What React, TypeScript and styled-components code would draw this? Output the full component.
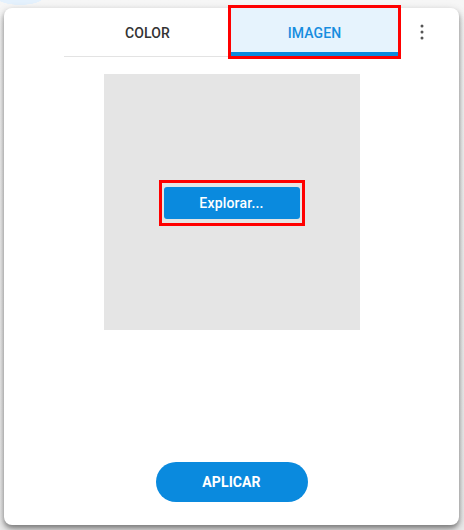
import React from "react";
import styled, { createGlobalStyle } from "styled-components";

const GlobalStyle = createGlobalStyle`
  html, body {
    margin: 0;
    padding: 0;
  }
  body {
    width: 464px;
    height: 530px;
    overflow: hidden;
    font-family: Roboto, "Liberation Sans", Arial, sans-serif;
    background:
      radial-gradient(ellipse 24px 8px at 20px -3px, #e4f1fd 96%, transparent 100%),
      linear-gradient(#f6f6f6, #ececec);
  }
`;

const Page = styled.div`
  padding: 8px 5px 0 4px;
`;

const Dialog = styled.div`
  width: 455px;
  height: 517px;
  background: #ffffff;
  border-radius: 8px;
  box-shadow: 0 3px 4px rgba(0, 0, 0, 0.28), 0 4px 10px rgba(0, 0, 0, 0.3);
  display: flex;
  flex-direction: column;
  align-items: center;
  box-sizing: border-box;
`;

const Header = styled.div`
  width: 100%;
  display: grid;
  grid-template-columns: 60px 1fr 61px;
  align-items: start;
`;

const Tabs = styled.div`
  grid-column: 2;
  display: grid;
  grid-template-columns: 1fr 1fr;
  border-bottom: 1px solid #e3e3e3;
`;

const Tab = styled.button<{ $active?: boolean; $marked?: boolean }>`
  height: 48px;
  border: none;
  margin: 0;
  padding: 2px 0 0;
  font-family: Roboto, "Liberation Sans", Arial, sans-serif;
  font-size: 14px;
  font-weight: 500;
  letter-spacing: 0.1px;
  text-transform: uppercase;
  cursor: pointer;
  color: ${(p) => (p.$active ? "#168ddf" : "#333333")};
  background: ${(p) => (p.$active ? "#e6f3fd" : "transparent")};
  box-shadow: ${(p) => (p.$active ? "inset 0 -4px 0 #0a8ade" : "none")};
  outline: ${(p) => (p.$marked ? "3px solid #ff0000" : "none")};
  position: relative;
  z-index: 1;
`;

const MenuButton = styled.button`
  grid-column: 3;
  justify-self: start;
  margin: 12px 0 0 12px;
  width: 24px;
  height: 24px;
  border: none;
  padding: 0;
  background: transparent;
  color: #555555;
  cursor: pointer;
  display: flex;
  align-items: center;
  justify-content: center;
`;

const Preview = styled.div`
  margin-top: 17px;
  width: 256px;
  height: 256px;
  background: #e5e5e5;
  display: flex;
  align-items: center;
  justify-content: center;
`;

const Marker = styled.span`
  display: inline-flex;
  border: 3px solid #ff0000;
  padding: 4px 2px;
  margin-top: 2px;
`;

const BrowseButton = styled.button`
  width: 136px;
  height: 32px;
  border: none;
  border-radius: 3px;
  background: #0a8ade;
  color: #ffffff;
  font-family: Roboto, "Liberation Sans", Arial, sans-serif;
  font-size: 14px;
  font-weight: 500;
  letter-spacing: 0.2px;
  cursor: pointer;
`;

const Spacer = styled.div`
  flex: 1;
`;

const ApplyButton = styled.button`
  width: 152px;
  height: 40px;
  border: none;
  border-radius: 20px;
  background: #0a8ade;
  color: #ffffff;
  font-family: Roboto, "Liberation Sans", Arial, sans-serif;
  font-size: 14px;
  font-weight: 700;
  letter-spacing: 0.1px;
  cursor: pointer;
  margin-bottom: 23px;
`;

function KebabIcon() {
  return (
    <svg width="24" height="24" viewBox="0 0 24 24" aria-hidden="true">
      <circle cx="12" cy="6" r="1.5" fill="currentColor" />
      <circle cx="12" cy="12" r="1.5" fill="currentColor" />
      <circle cx="12" cy="18" r="1.5" fill="currentColor" />
    </svg>
  );
}

export default function App() {
  return (
    <>
      <GlobalStyle />
      <Page>
        <Dialog>
          <Header>
            <Tabs>
              <Tab>Color</Tab>
              <Tab $active $marked>
                Imagen
              </Tab>
            </Tabs>
            <MenuButton aria-label="Más opciones">
              <KebabIcon />
            </MenuButton>
          </Header>
          <Preview>
            <Marker>
              <BrowseButton>Explorar...</BrowseButton>
            </Marker>
          </Preview>
          <Spacer />
          <ApplyButton>APLICAR</ApplyButton>
        </Dialog>
      </Page>
    </>
  );
}
